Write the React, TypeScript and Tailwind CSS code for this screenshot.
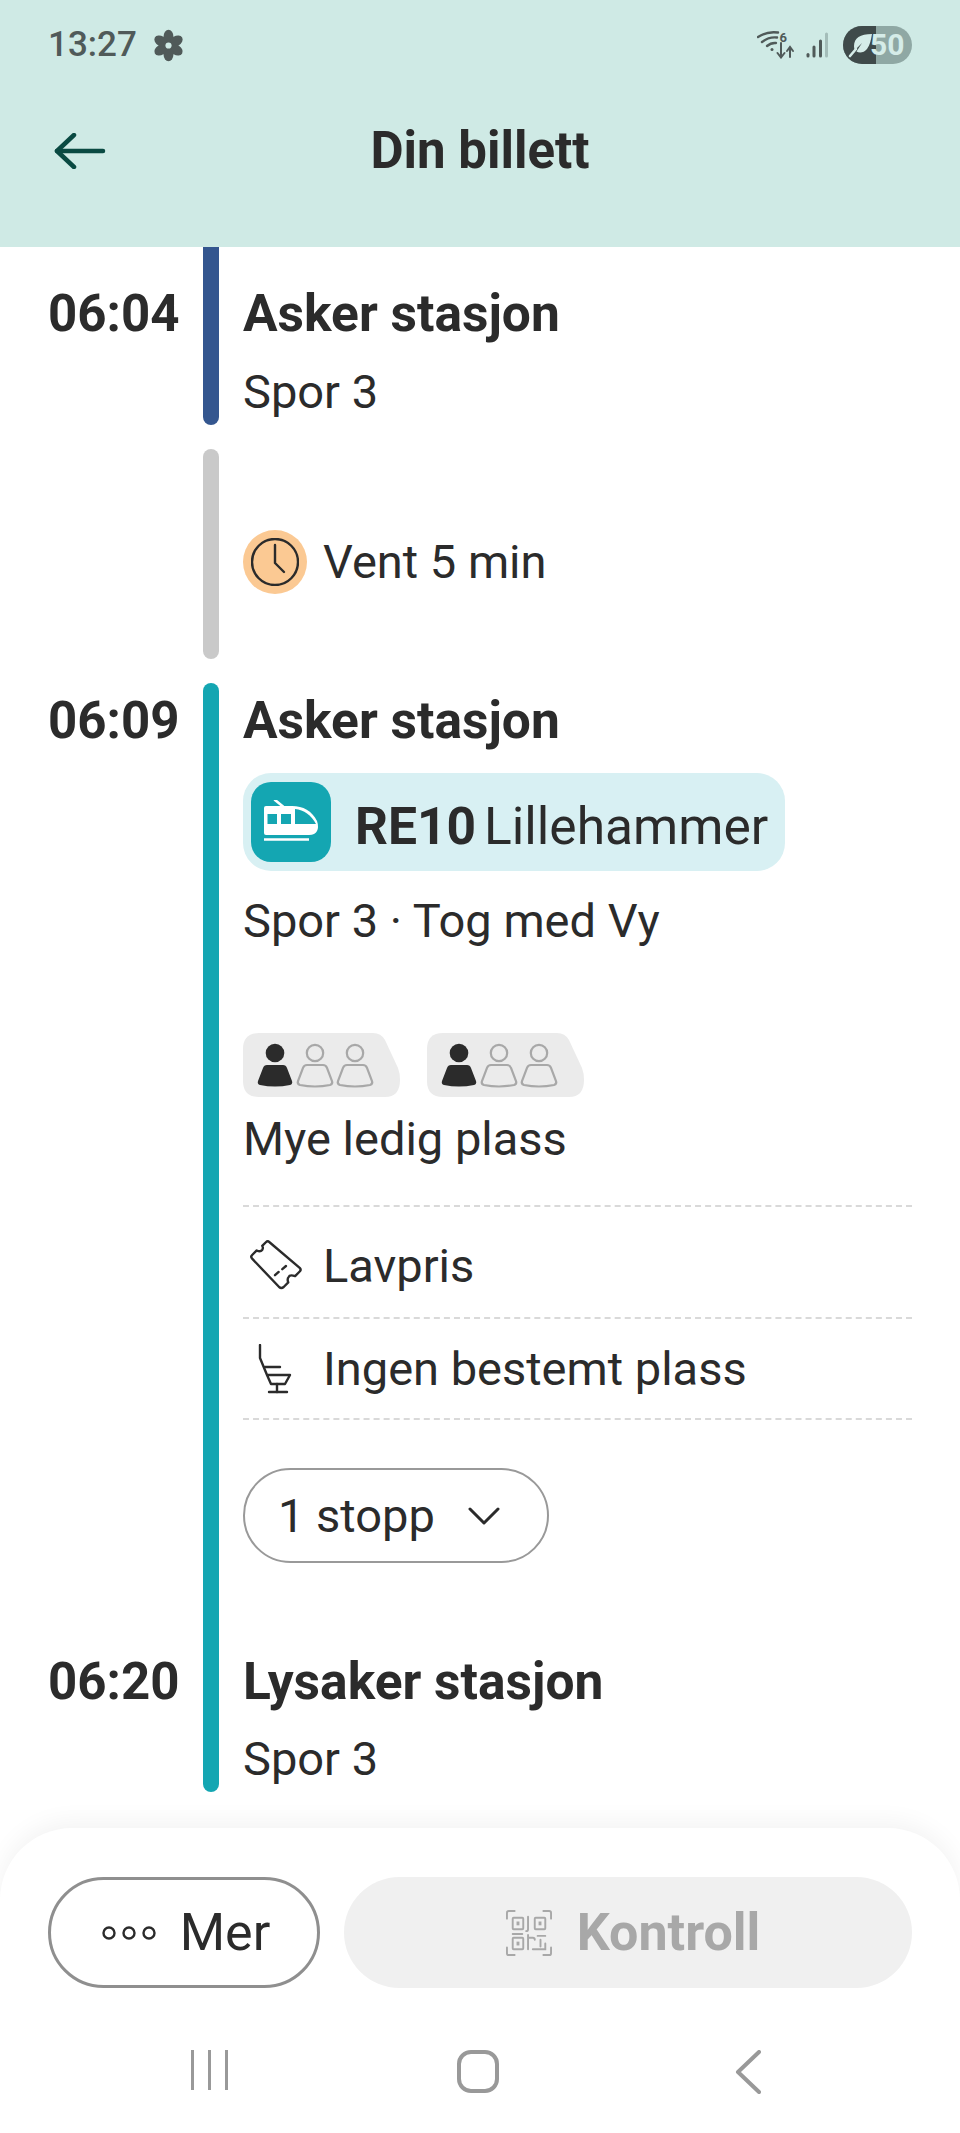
import React from "react";

const INK = "#2b2b2b";

function Flower() {
  const petals = [0, 60, 120, 180, 240, 300];
  return (
    <svg width="33" height="35" viewBox="0 0 32 32" fill="#505a59">
      {petals.map((a) => (
        <ellipse key={a} cx="16" cy="7.500" rx="4.800" ry="6.800" transform={`rotate(${a} 16 16)`} />
      ))}
      <circle cx="16" cy="16" r="3" fill="#cfeae5" />
    </svg>
  );
}

function WifiIcon() {
  return (
    <svg width="40" height="28" viewBox="0 0 40 28" fill="none" stroke="#505a59" strokeWidth="2.400" strokeLinecap="round">
      <path d="M1 6 Q10 0 21 1.500" />
      <path d="M5 11 Q12 5.500 20 6.500" />
      <path d="M10 15 Q14 11.500 19 12" />
      <circle cx="15" cy="18.500" r="1.500" fill="#505a59" stroke="none" />
      <text x="22.500" y="10.500" fontSize="13" fontWeight="700" fill="#505a59" stroke="none" fontFamily="Roboto, sans-serif">6</text>
      <path d="M24 12 V26 M20.500 22 L24 26.500 L27.500 22" strokeWidth="2" />
      <path d="M33 26 V17 M30 20 L33 16 L36 20" strokeWidth="2" />
    </svg>
  );
}

function SignalIcon() {
  return (
    <svg width="22" height="26" viewBox="0 0 22 26" fill="none" strokeWidth="3" strokeLinecap="round">
      <path d="M2 24 V22.500" stroke="#505a59" />
      <path d="M8 24 V15" stroke="#505a59" />
      <path d="M14.500 24 V9" stroke="#505a59" />
      <path d="M20.500 24 V2" stroke="#a4bdb9" />
    </svg>
  );
}

function LeafIcon() {
  return (
    <svg width="26" height="26" viewBox="0 0 26 26" fill="#d5ece8">
      <path d="M24 2 C12 2 6 6 6 14 C6 16 6.500 17 7 18 L14 11 L8.500 19.500 C11 21 16 21 19 17 C22 13 23 8 24 2 Z" />
      <path d="M2 24 L8 17" stroke="#d5ece8" strokeWidth="2.600" strokeLinecap="round" />
    </svg>
  );
}

function BackArrow() {
  return (
    <svg width="52" height="36" viewBox="0 0 52 36" fill="none" stroke="#0a4a42" strokeWidth="4.500" strokeLinecap="round" strokeLinejoin="round">
      <path d="M3 18 H49" />
      <path d="M20 2 L3 18 L20 34" />
    </svg>
  );
}

function ClockIcon() {
  return (
    <svg width="48" height="48" viewBox="0 0 48 48" fill="none" stroke={INK} strokeWidth="2.400" strokeLinecap="round" strokeLinejoin="round">
      <circle cx="24" cy="24" r="23" />
      <path d="M24 7 V25 L33 34" />
    </svg>
  );
}

function TrainIcon() {
  return (
    <svg width="56" height="44" viewBox="0 0 56 44" fill="none">
      <path d="M12 0 L20 6.500" stroke="#ffffff" strokeWidth="2.600" strokeLinecap="round" />
      <path d="M1 8 Q1 6 3 6 H29 C40 6 49 11 54 21 Q56 27 54 31 Q52 35 46 35 H3 Q1 35 1 33 Z" fill="#ffffff" />
      <path d="M4.500 14 H14 V24 H4.500 Z M18 14 H28 V24 H18 Z" fill="#14a6b2" />
      <path d="M32 9 C41 10 48 15 53 24 H32 Z" fill="#14a6b2" />
      <path d="M1 39.500 H46" stroke="#ffffff" strokeWidth="2.600" />
    </svg>
  );
}

function Person({ x, solid }: { x: number; solid: boolean }) {
  const c = solid ? "#2b2b2b" : "#a8a8a8";
  const body = "M-8 32 H8 Q11 32 12 35 L17 48 Q18 51 15 52 Q0 55 -15 52 Q-18 51 -17 48 L-12 35 Q-11 32 -8 32 Z";
  return (
    <g transform={`translate(${x} 0)`}>
      <circle cx="0" cy="20" r={solid ? 9.300 : 8.200} fill={solid ? c : "none"} stroke={c} strokeWidth={solid ? 0 : 2.200} />
      <path d={body} fill={solid ? c : "none"} stroke={c} strokeWidth={solid ? 0 : 2.200} />
    </g>
  );
}

function CrowdChip() {
  return (
    <svg width="158" height="64" viewBox="0 0 158 64">
      <path d="M16 0 H130 Q138 0 142 7 L155 35 Q157 40 157 47 Q157 64 142 64 H16 Q0 64 0 48 V16 Q0 0 16 0 Z" fill="#ebebeb" />
      <Person x={32} solid />
      <Person x={72} solid={false} />
      <Person x={112} solid={false} />
    </svg>
  );
}

function TicketIcon() {
  return (
    <svg width="70" height="64" viewBox="0 0 70 64" fill="none" stroke={INK} strokeWidth="2.600" strokeLinejoin="round" strokeLinecap="round">
      <path d="M25 6 Q27 4 29 6 L62 34 Q64 36 62 38 L57 43 Q51 41 50 44 Q48 46 49.500 50 L44.500 55 Q42 57 39.500 55 L10 24 Q8 22 10 20 L15 15 Q19 17 21 14.500 Q22.500 12 21 10 Z" />
      <path d="M35 42 L39 38.500 M43 35.500 L47 32" />
    </svg>
  );
}

function SeatIcon() {
  return (
    <svg width="34" height="50" viewBox="-1 -1 34 50" fill="none" stroke={INK} strokeWidth="2.400" strokeLinecap="round" strokeLinejoin="round">
      <path d="M1 0 V13 L8 30 H31 L26 39 H12 L8 30" />
      <path d="M6 22 H21" />
      <path d="M18 39 V47" />
      <path d="M10 47 H28" />
    </svg>
  );
}

function Chevron() {
  return (
    <svg width="32" height="18" viewBox="0 0 32 18" fill="none" stroke={INK} strokeWidth="3" strokeLinecap="round" strokeLinejoin="round">
      <path d="M2 2 L16 16 L30 2" />
    </svg>
  );
}

function QrIcon() {
  return (
    <svg width="46" height="46" viewBox="0 0 48 48" fill="none" stroke="#a8a8a8" strokeWidth="2" strokeLinecap="round">
      <path d="M1 9 V3 Q1 1 3 1 H9 M39 1 H45 Q47 1 47 3 V9 M47 39 V45 Q47 47 45 47 H39 M9 47 H3 Q1 47 1 45 V39" />
      <rect x="7" y="8" width="11" height="12" rx="1" />
      <rect x="11" y="12" width="3" height="4" fill="#a8a8a8" stroke="none" />
      <rect x="30" y="8" width="11" height="12" rx="1" />
      <rect x="34" y="12" width="3" height="4" fill="#a8a8a8" stroke="none" />
      <rect x="7" y="29" width="11" height="12" rx="1" />
      <rect x="11" y="33" width="3" height="4" fill="#a8a8a8" stroke="none" />
      <path d="M7 25 H17 M23 7 V20 Q23 22 21 22 M23 26 V41 M23 29 H28 Q30 29 30 31 M33 27 H41 M36 31 V38 M28 41 H41 V35" />
    </svg>
  );
}

function DotsIcon() {
  return (
    <svg width="54" height="16" viewBox="0 0 54 16" fill="none" stroke={INK} strokeWidth="2.400">
      <circle cx="7" cy="8" r="5.500" />
      <circle cx="27" cy="8" r="5.500" />
      <circle cx="47" cy="8" r="5.500" />
    </svg>
  );
}

function Dashed() {
  return <div className="border-t-2 border-dashed border-[#d9d9d9] h-0" />;
}

const TIME = "text-[51px] leading-[56px] font-bold";
const STOP = "text-[51.500px] leading-[56px] font-bold";
const BODY = "text-[47px] leading-[56px]";

export default function App() {
  return (
    <div className="w-[960px] h-[2133px] bg-white flex flex-col overflow-hidden font-['Roboto',sans-serif] text-[#2b2b2b]">
      <header className="h-[247px] shrink-0 bg-[#cfeae5] flex flex-col">
        <div className="h-[90px] px-12 flex items-center justify-between text-[#505a59]">
          <div className="flex items-center gap-[15px] text-[35px] font-medium">
            <span>13:27</span>
            <Flower />
          </div>
          <div className="flex items-center">
            <WifiIcon />
            <div className="ml-[9px]"><SignalIcon /></div>
            <div className="relative w-[69px] h-[38px] ml-[15px] rounded-full overflow-hidden flex bg-[#8fa8a4]">
              <div className="w-[33px] h-full bg-[#3f4a4a] flex items-center pl-[5px]">
                <LeafIcon />
              </div>
              <span className="absolute left-[27px] top-0 leading-[38px] text-[30px] font-bold text-[#d5ece8]">50</span>
            </div>
          </div>
        </div>
        <div className="mt-[30px] h-[62px] pl-[54px] flex items-center relative">
          <BackArrow />
          <div className="absolute inset-x-0 top-0 text-center text-[51px] leading-[62px] font-bold">Din billett</div>
        </div>
      </header>

      <main className="flex flex-col flex-1">
        {/* departure leg */}
        <section className="flex h-[178px]">
          <div className={`w-[203px] shrink-0 pl-12 pt-[39px] ${TIME}`}>06:04</div>
          <div className="w-4 bg-[#34568f] rounded-b-lg" />
          <div className="pl-[24px] pt-[39px]">
            <div className={STOP}>Asker stasjon</div>
            <div className={`mt-[22px] ${BODY}`}>Spor 3</div>
          </div>
        </section>

        {/* transfer */}
        <section className="flex h-[210px] mt-6">
          <div className="w-[203px] shrink-0" />
          <div className="w-4 bg-[#c9c9c9] rounded-lg" />
          <div className="pl-[24px] pt-[81px] flex items-center gap-4 self-start">
            <div className="w-16 h-16 rounded-full bg-[#fbc993] flex items-center justify-center">
              <ClockIcon />
            </div>
            <div className="text-[47px] leading-[64px]">Vent 5 min</div>
          </div>
        </section>

        {/* train leg */}
        <section className="flex h-[1109px] mt-6">
          <div className={`w-[203px] shrink-0 pl-12 pt-[10px] ${TIME}`}>
            <div>06:09</div>
            <div className="mt-[905px]">06:20</div>
          </div>
          <div className="w-4 bg-[#14a6b2] rounded-lg" />
          <div className="pl-[24px] flex-1 pr-12 pt-[10px] flex flex-col">
            <div className={STOP}>Asker stasjon</div>
            <div className="mt-[24px] h-[98px] w-[542px] bg-[#d8f0f3] rounded-[28px] flex items-center pl-2">
              <div className="w-[80px] h-[80px] rounded-[20px] bg-[#14a6b2] flex items-center justify-center">
                <TrainIcon />
              </div>
              <span className="ml-6 pt-[10px] text-[51.500px] font-bold">RE10</span>
              <span className="ml-2 pt-[10px] text-[51.500px]">Lillehammer</span>
            </div>
            <div className={`mt-[22px] ${BODY}`}>Spor 3 · Tog med Vy</div>
            <div className="mt-[84px] flex gap-[26px]">
              <CrowdChip />
              <CrowdChip />
            </div>
            <div className={`mt-[14px] ${BODY}`}>Mye ledig plass</div>
            <div className="mt-[38px]"><Dashed /></div>
            <div className="h-[110px] flex items-center gap-4">
              <div className="w-16 h-16 mt-[8px] flex justify-center items-center"><TicketIcon /></div>
              <span className={`pt-[7px] ${BODY}`}>Lavpris</span>
            </div>
            <Dashed />
            <div className="h-[99px] flex items-center gap-4">
              <div className="w-16 flex justify-center"><SeatIcon /></div>
              <span className={BODY}>Ingen bestemt plass</span>
            </div>
            <Dashed />
            <div className="mt-[48px] w-[306px] h-[95px] rounded-full border-2 border-[#999999] flex items-center pl-[33px] gap-[33px]">
              <span className={BODY}>1 stopp</span>
              <Chevron />
            </div>
            <div className={`mt-[91px] ${STOP}`}>Lysaker stasjon</div>
            <div className={`mt-[21px] ${BODY}`}>Spor 3</div>
          </div>
        </section>
      </main>

      <footer className="h-[305px] shrink-0 bg-white rounded-t-[72px] shadow-[0_-6px_24px_rgba(0,0,0,0.05)] flex flex-col">
        <div className="flex gap-6 px-12 pt-[49px]">
          <button className="w-[272px] h-[111px] rounded-full border-[3px] border-[#8f8f8f] flex items-center justify-center gap-[24px] pl-[4px]">
            <DotsIcon />
            <span className="text-[52px]">Mer</span>
          </button>
          <button className="flex-1 h-[111px] rounded-full bg-[#f0f0f0] flex items-center justify-center gap-[25px] pl-[10px] text-[#a8a8a8]">
            <QrIcon />
            <span className="text-[52px] font-bold">Kontroll</span>
          </button>
        </div>
        <nav className="flex-1 flex items-start pt-[62px] pl-[191px]">
          <div className="flex gap-[14px] h-[40px]">
            <div className="w-[3px] h-full bg-[#999999]" />
            <div className="w-[3px] h-full bg-[#999999]" />
            <div className="w-[3px] h-full bg-[#999999]" />
          </div>
          <div className="ml-[229px] w-[42px] h-[43px] rounded-[14px] border-[4px] border-[#999999]" />
          <svg className="ml-[236px]" width="26" height="44" viewBox="0 0 26 44" fill="none" stroke="#999999" strokeWidth="4" strokeLinecap="round" strokeLinejoin="round">
            <path d="M24 2 L3 22 L24 42" />
          </svg>
        </nav>
      </footer>
    </div>
  );
}
